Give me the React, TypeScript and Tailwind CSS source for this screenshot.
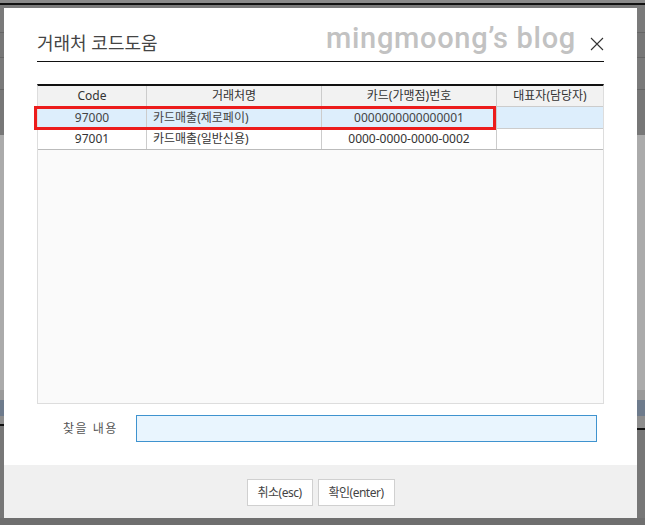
import React from 'react';

const font = { fontFamily: '"Noto Sans", "Noto Sans CJK KR", sans-serif' };

const rows = [
  { code: '97000', name: '카드매출(제로페이)', card: '0000000000000001', rep: '', selected: true },
  { code: '97001', name: '카드매출(일반신용)', card: '0000-0000-0000-0002', rep: '', selected: false },
];

const SideStrip = ({ right }: { right?: boolean }) => (
  <div className="flex h-full flex-col">
    <div className="h-[25px] bg-[#7a7a7a] border-b border-[#666]" />
    <div className="h-[25px] bg-[#777] border-b border-[#666]" />
    <div className="h-[32px] bg-[#7a7a7a] border-b border-[#666]" />
    <div className="h-[45px] bg-[#777]" />
    <div className="h-[255px] bg-[#ababab]" />
    <div className="h-[10px] bg-[#9a9a9a]" />
    <div className="h-[16px] bg-[#6e7b8c]" />
    <div className={right ? 'h-[14px] bg-[#8d8d8d] border-b-2 border-[#111]' : 'h-[10px] bg-[#8d8d8d] border-b-2 border-[#111]'} />
    <div className="flex-1 bg-[#777]" />
  </div>
);

export default function App() {
  return (
    <div className="flex h-[525px] w-[645px] flex-col overflow-hidden bg-[#7f7f7f]" style={font}>
      {/* page behind the modal */}
      <div className="h-[8px] shrink-0">
        <div className="h-[3px] bg-[#8a8a8a]" />
        <div className="h-[2px] bg-[#111]" />
        <div className="h-[3px] bg-[#7a7a7a]" />
      </div>
      <div className="flex h-[510px] shrink-0">
        <div className="w-[4px] shrink-0">
          <SideStrip />
        </div>

        {/* modal */}
        <div className="flex w-[633px] shrink-0 flex-col bg-white">
          <div className="flex flex-1 flex-col px-[33px]">
            <div className="flex h-[54px] items-end justify-between border-b border-[#111] pb-[6px]">
              <h1 className="text-[18px] leading-[24px] text-[#444]">거래처 코드도움</h1>
              <div className="flex items-end">
                <span className="text-[29px] font-medium leading-[34px] tracking-[0.7px] text-[#c2c2c2]" style={{ fontFamily: 'Roboto, "Noto Sans", sans-serif' }}>
                  mingmoong’s blog
                </span>
                <svg className="mb-[4px] ml-[14px]" width="14" height="14" viewBox="0 0 14 14">
                  <path d="M1 1 L13 13 M13 1 L1 13" stroke="#333" strokeWidth="1.1" fill="none" />
                </svg>
              </div>
            </div>

            {/* grid */}
            <div className="relative mt-[22px] flex h-[320px] flex-col border-t-2 border-[#111] bg-[#fafafa] border-x border-b border-x-[#ddd] border-b-[#ddd]">
              <div className="grid h-[21px] grid-cols-[108px_175px_175px_1fr] border-b border-[#ccc] bg-[#f2f2f2] text-[12px] leading-[20px] text-[#333]">
                <div className="text-center">Code</div>
                <div className="border-l border-[#ccc] text-center">거래처명</div>
                <div className="border-l border-[#ccc] text-center">카드(가맹점)번호</div>
                <div className="border-l border-[#ccc] text-center">대표자(담당자)</div>
              </div>
              {rows.map((r) => (
                <div
                  key={r.code}
                  className={
                    r.selected
                      ? 'grid h-[22px] grid-cols-[108px_175px_175px_1fr] border-b border-[#ccc] bg-[#ddeefc] text-[12px] leading-[21px] text-[#444]'
                      : 'grid h-[21px] grid-cols-[108px_175px_175px_1fr] border-b border-[#bbb] bg-white text-[12px] leading-[20px] text-[#333]'
                  }
                >
                  <div className="text-center">{r.code}</div>
                  <div className="border-l border-[#ccc] pl-[6px]">{r.name}</div>
                  <div className="border-l border-[#ccc] text-center">{r.card}</div>
                  <div className="border-l border-[#ccc]">{r.rep}</div>
                </div>
              ))}
              {/* red highlight box */}
              <div className="pointer-events-none absolute left-[-4px] top-[20px] h-[24px] w-[462px] border-[3px] border-[#ec1c1c]" />
            </div>

            <div className="mt-[11px] flex items-center">
              <span className="w-[99px] pl-[26px] text-[12px] tracking-[1.5px] text-[#555]">찾을 내용</span>
              <div className="h-[27px] w-[461px] border border-[#3f93cf] bg-[#e9f5fe]" />
            </div>
          </div>

          <div className="mt-[23px] flex h-[54px] shrink-0 items-start justify-center gap-[5px] bg-[#f0f0f0] pt-[14px]">
            <button className="h-[27px] w-[66px] border border-[#d0d0d0] bg-white text-[12px] tracking-[-0.5px] text-[#444]">취소(esc)</button>
            <button className="h-[27px] w-[77px] border border-[#d0d0d0] bg-white text-[12px] tracking-[-0.5px] text-[#444]">확인(enter)</button>
          </div>
        </div>

        <div className="w-[8px] shrink-0">
          <SideStrip right />
        </div>
      </div>
      <div className="flex-1 bg-[#6f6f6f]" />
    </div>
  );
}
